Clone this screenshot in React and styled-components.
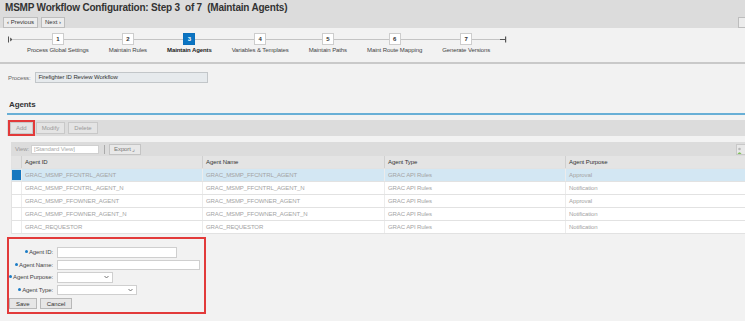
import styled, { createGlobalStyle } from "styled-components";

const GlobalStyle = createGlobalStyle`
    body {
        margin: 0;
        background: #f2f2f2;
        font-family: "Liberation Sans", Arial, sans-serif;
        font-size: 6px;
        letter-spacing: -0.1px;
        color: #333;
        overflow: hidden;
    }
`

const Header = styled.div`
    background: #dcdcdc;
    height: 28px;
    box-sizing: border-box;
    padding: 2px 3px 0 5px;
`

const Title = styled.h1`
    margin: 0;
    font-size: 10px;
    line-height: 12px;
    font-weight: bold;
    letter-spacing: -0.2px;
    color: #333;
    white-space: pre;
`

const NavRow = styled.div`
    display: flex;
    align-items: center;
    gap: 3px;
    margin-top: 3px;
    margin-left: -2px;
`

const NavButton = styled.button`
    font: inherit;
    font-size: 6px;
    height: 11px;
    padding: 0 3px;
    line-height: 9px;
    background: #ececec;
    border: 1px solid #bdbdbd;
    color: #333;
    ${p => p.$edge && "margin-left: auto; margin-right: -16px; width: 20px;"}
`

const Steps = styled.div`
    display: flex;
    align-items: flex-start;
    height: 36px;
    box-sizing: border-box;
    padding: 5px 0 0 7px;
    border-bottom: 2px solid #c9c9c9;
`

const Step = styled.div`
    position: relative;
    display: flex;
    flex-direction: column;
    align-items: center;
    padding: 0 10px;

    &::before {
        content: "";
        position: absolute;
        left: 0;
        right: 0;
        top: 6px;
        height: 1px;
        background: #c4c4c4;
    }
`

const StepBox = styled.div`
    position: relative;
    width: 12px;
    height: 12px;
    box-sizing: border-box;
    border: 1px solid ${p => (p.$active ? "#0b6fbb" : "#cdcdcd")};
    background: ${p => (p.$active ? "#0b74c2" : "#fff")};
    color: ${p => (p.$active ? "#fff" : "#333")};
    font-size: 6px;
    font-weight: bold;
    line-height: 10px;
    text-align: center;
`

const StepLabel = styled.div`
    margin-top: 2px;
    white-space: nowrap;
    font-size: 6px;
    font-weight: ${p => (p.$active ? "bold" : "normal")};
    color: ${p => (p.$active ? "#222" : "#444")};
`

const ProcessRow = styled.div`
    display: flex;
    align-items: center;
    gap: 4px;
    margin: 8px 0 0 8px;
    color: #666;
`

const ProcessField = styled.div`
    width: 173px;
    height: 11px;
    box-sizing: border-box;
    border: 1px solid #c2c6c9;
    background: #e6eaed;
    padding-left: 3px;
    line-height: 9px;
    color: #333;
`

const SectionTitle = styled.h2`
    margin: 16px 0 0 7px;
    padding: 0 0 3px 2px;
    font-size: 8px;
    line-height: 11px;
    font-weight: bold;
    color: #333;
    border-bottom: 2px solid #68afd6;
`

const Toolbar = styled.div`
    display: flex;
    align-items: center;
    gap: 3px;
    margin: 5px 0 0 7px;
    padding: 0 3px;
    height: 16px;
    box-sizing: border-box;
    background: #dcdcdc;
`

const ToolButton = styled.button`
    font: inherit;
    font-size: 6px;
    height: 12px;
    padding: 0 5px;
    background: #e4e4e4;
    border: 1px solid #c8c8c8;
    color: #999;
    outline: ${p => (p.$marked ? "2px solid #e23a3a" : "none")};
    outline-offset: 0;
`

const Table = styled.div`
    margin: 6px 0 0 11px;
    background: #fff;
`

const TableBar = styled.div`
    display: flex;
    align-items: center;
    height: 14px;
    padding: 0 0 0 4px;
    background: #dcdcdc;
    color: #999;
    gap: 2px;
`

const ViewInput = styled.div`
    width: 68px;
    height: 9px;
    box-sizing: border-box;
    border: 1px solid #d0d0d0;
    background: #fff;
    padding-left: 2px;
    line-height: 7px;
    color: #aaa;
`

const Separator = styled.div`
    width: 1px;
    height: 9px;
    background: #aaa;
    margin: 0 2px 0 3px;
`

const ExportButton = styled.div`
    height: 9px;
    line-height: 8px;
    padding: 0 5px 0 4px;
    border: 1px solid #c4c4c4;
    background: #e8e8e8;
    color: #777;
`

const Personalize = styled.div`
    margin-left: auto;
    margin-right: -2px;
    width: 9px;
    height: 9px;
    border: 1px solid #c8c8c8;
    background: #e8e8e8;
    display: flex;
    align-items: flex-end;
`

const Row = styled.div`
    display: grid;
    grid-template-columns: 10px 181px 182px 181px 1fr;
    height: 13px;
    box-sizing: border-box;
    border-bottom: 1px solid #e2e2e2;
    background: ${p => (p.$head ? "#e4e4e4" : p.$selected ? "#d3e7f3" : "#fff")};
    color: ${p => (p.$head ? "#333" : "#a3a3a3")};
    line-height: 12px;
`

const Cell = styled.div`
    padding-left: 3px;
    border-left: 1px solid ${p => (p.$head ? "#d0d0d0" : "#ececec")};
    white-space: nowrap;
    overflow: hidden;
`

const Selector = styled.div`
    border-left: 1px solid #e2e2e2;
    background: ${p => (p.$on ? "#1677bf" : "transparent")};
    margin: ${p => (p.$on ? "1px 0" : "0")};
`

const Form = styled.div`
    width: 199px;
    margin: 3px 0 0 7px;
    box-sizing: border-box;
    border: 2px solid #e23a3a;
    padding: 8px 0 3px 0;
`

const FormGrid = styled.div`
    display: grid;
    grid-template-columns: 44px auto;
    column-gap: 4px;
    row-gap: 2px;
    align-items: center;
`

const Label = styled.label`
    display: flex;
    justify-content: flex-end;
    align-items: flex-start;
    color: #444;
    white-space: nowrap;

    &::before {
        content: "";
        flex: none;
        width: 3px;
        height: 3px;
        border-radius: 50%;
        background: #1b7cc6;
        margin: 1px 1px 0 0;
    }
`

const Field = styled.div`
    width: ${p => p.$w}px;
    height: 10.5px;
    box-sizing: border-box;
    border: 1px solid #cfcfcf;
    background: #fff;
    display: flex;
    align-items: center;
    justify-content: flex-end;
    padding-right: 3px;
`

const FormButtons = styled.div`
    display: flex;
    gap: 3px;
    margin-top: 3px;
`

const FormButton = styled.button`
    font: inherit;
    font-size: 6px;
    height: 11px;
    padding: 0 6px;
    background: #e6e6e6;
    border: 1px solid #b8b8b8;
    color: #333;
`

const steps = [
    "Process Global Settings",
    "Maintain Rules",
    "Maintain Agents",
    "Variables & Templates",
    "Maintain Paths",
    "Maint Route Mapping",
    "Generate Versions",
];

const agents = [
    ["GRAC_MSMP_FFCNTRL_AGENT", "GRAC API Rules", "Approval"],
    ["GRAC_MSMP_FFCNTRL_AGENT_N", "GRAC API Rules", "Notification"],
    ["GRAC_MSMP_FFOWNER_AGENT", "GRAC API Rules", "Approval"],
    ["GRAC_MSMP_FFOWNER_AGENT_N", "GRAC API Rules", "Notification"],
    ["GRAC_REQUESTOR", "GRAC API Rules", "Notification"],
];

const Chevron = () => (
    <svg width="5" height="4" viewBox="0 0 5 4">
        <path d="M0.5 1 L2.5 3 L4.5 1" fill="none" stroke="#666" strokeWidth="0.9" />
    </svg>
);

function App() {
    return (
        <>
            <GlobalStyle />
            <Header>
                <Title>MSMP Workflow Configuration: Step 3  of 7  (Maintain Agents)</Title>
                <NavRow>
                    <NavButton>‹ Previous</NavButton>
                    <NavButton>Next ›</NavButton>
                    <NavButton $edge>&nbsp;</NavButton>
                </NavRow>
            </Header>
            <Steps>
                <svg width="10" height="13" viewBox="0 0 10 13">
                    <rect x="1" y="3.5" width="1" height="6" fill="#555" />
                    <path d="M3 6.5 L5.5 4.5 L5.5 8.5 Z" fill="#555" transform="rotate(180 4.3 6.5)" />
                    <rect x="5" y="6" width="5" height="1" fill="#c4c4c4" />
                </svg>
                {steps.map((label, i) => (
                    <Step key={label}>
                        <StepBox $active={i === 2}>{i + 1}</StepBox>
                        <StepLabel $active={i === 2}>{label}</StepLabel>
                    </Step>
                ))}
                <svg width="8" height="13" viewBox="0 0 8 13">
                    <rect x="0" y="6" width="5" height="1" fill="#555" />
                    <rect x="5" y="3.5" width="1.2" height="6" fill="#555" />
                </svg>
            </Steps>
            <ProcessRow>
                <span>Process:</span>
                <ProcessField>Firefighter ID Review Workflow</ProcessField>
            </ProcessRow>
            <SectionTitle>Agents</SectionTitle>
            <Toolbar>
                <ToolButton $marked>Add</ToolButton>
                <ToolButton>Modify</ToolButton>
                <ToolButton>Delete</ToolButton>
            </Toolbar>
            <Table>
                <TableBar>
                    <span>View:</span>
                    <ViewInput>[Standard View]</ViewInput>
                    <Separator />
                    <ExportButton>Export ⌟</ExportButton>
                    <Personalize>
                        <svg width="7" height="7" viewBox="0 0 7 7">
                            <circle cx="2.5" cy="2" r="1.3" fill="#b8b8b8" />
                            <path d="M0.5 7 Q2.5 3.5 4.5 7 Z" fill="#7fbf5a" />
                        </svg>
                    </Personalize>
                </TableBar>
                <Row $head>
                    <Selector />
                    <Cell $head>Agent ID</Cell>
                    <Cell $head>Agent Name</Cell>
                    <Cell $head>Agent Type</Cell>
                    <Cell $head>Agent Purpose</Cell>
                </Row>
                {agents.map(([id, type, purpose], i) => (
                    <Row key={id} $selected={i === 0}>
                        <Selector $on={i === 0} />
                        <Cell>{id}</Cell>
                        <Cell>{id}</Cell>
                        <Cell>{type}</Cell>
                        <Cell>{purpose}</Cell>
                    </Row>
                ))}
            </Table>
            <Form>
                <FormGrid>
                    <Label>Agent ID:</Label>
                    <Field $w={120} />
                    <Label>Agent Name:</Label>
                    <Field $w={143} />
                    <Label>Agent Purpose:</Label>
                    <Field $w={56}><Chevron /></Field>
                    <Label>Agent Type:</Label>
                    <Field $w={80}><Chevron /></Field>
                </FormGrid>
                <FormButtons>
                    <FormButton>Save</FormButton>
                    <FormButton>Cancel</FormButton>
                </FormButtons>
            </Form>
        </>
    );
}

export default App;
